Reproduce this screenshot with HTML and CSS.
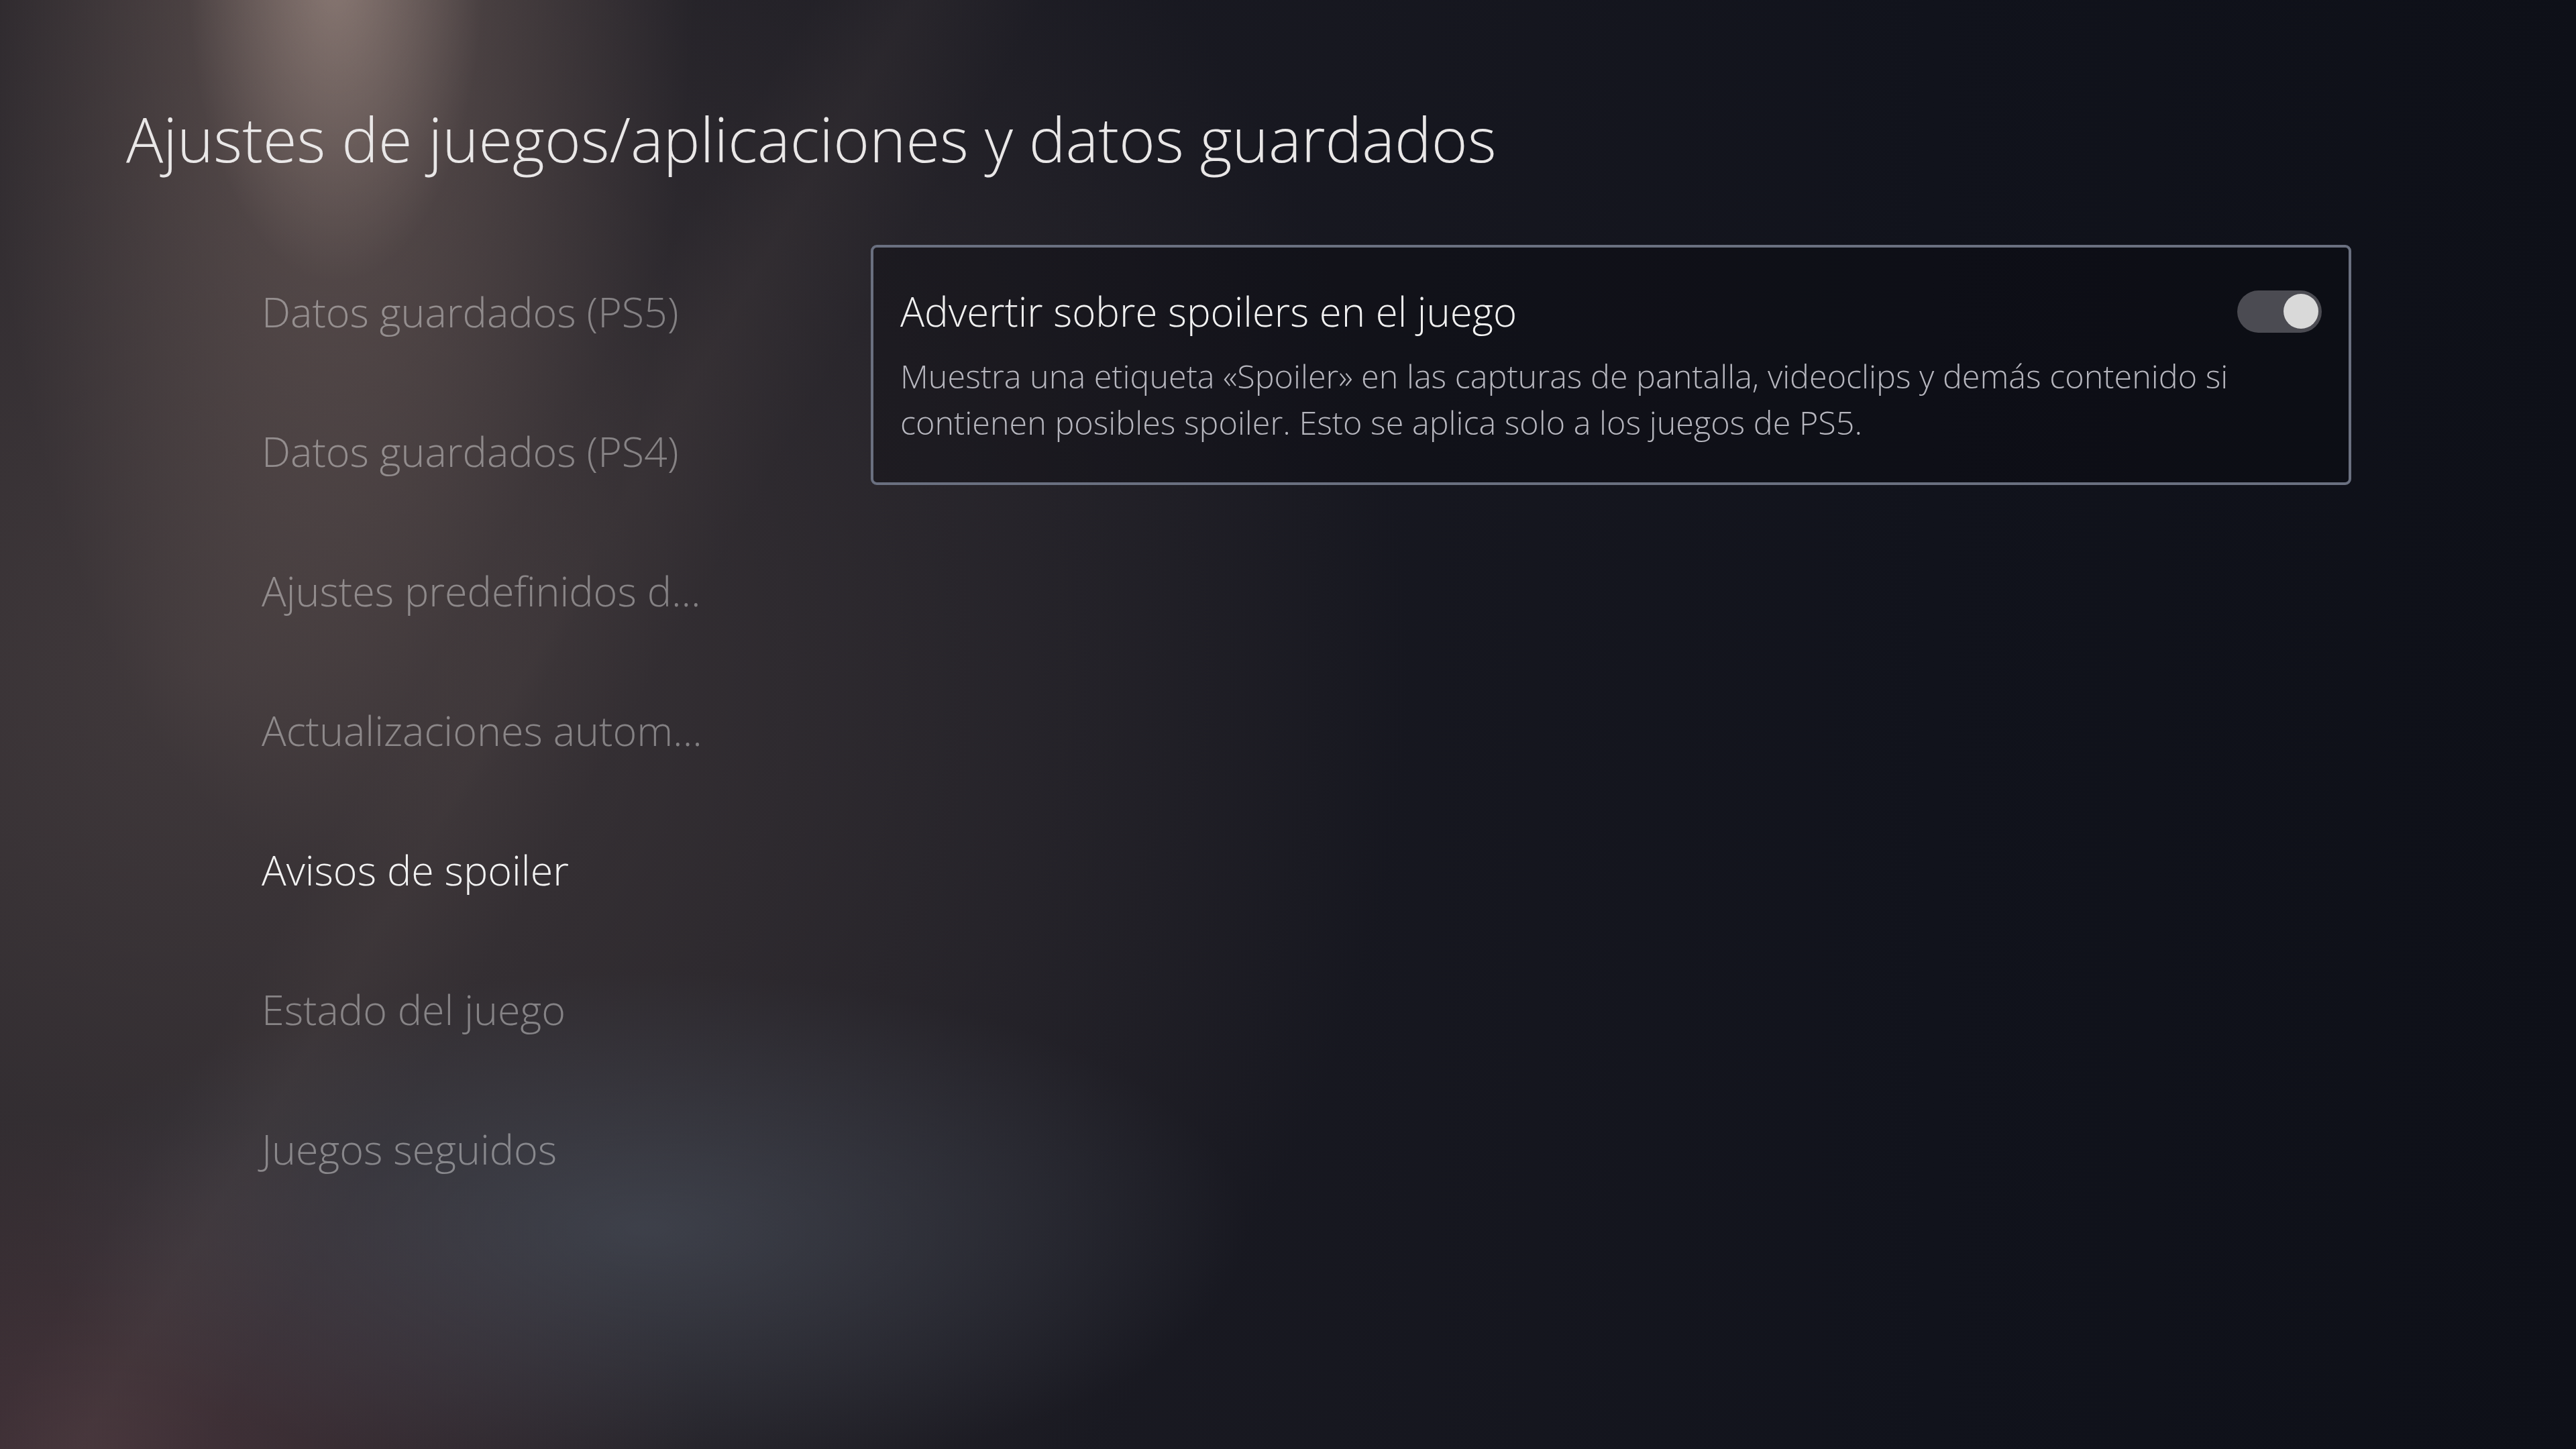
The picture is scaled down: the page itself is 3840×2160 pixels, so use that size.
FILE: index.html
```html
<!DOCTYPE html>
<html>
	<head>
		<meta content="text/html;charset=utf-8" http-equiv="Content-Type">
		<link rel="stylesheet" href="styles.css">
	</head>
	<body>
		<div class="screen">
			<h1 class="title">Ajustes de juegos/aplicaciones y datos guardados</h1>

			<div class="content">
				<ul class="menu">
					<li>Datos guardados (PS5)</li>
					<li>Datos guardados (PS4)</li>
					<li>Ajustes predefinidos d...</li>
					<li>Actualizaciones autom...</li>
					<li class="active">Avisos de spoiler</li>
					<li>Estado del juego</li>
					<li>Juegos seguidos</li>
				</ul>

				<div class="panel">
					<div class="option">
						<div class="option-head">
							<span class="option-title">Advertir sobre spoilers en el juego</span>
							<span class="toggle on"><span class="knob"></span></span>
						</div>
						<p class="option-desc">Muestra una etiqueta «Spoiler» en las capturas de pantalla, videoclips y demás contenido si contienen posibles spoiler. Esto se aplica solo a los juegos de PS5.</p>
					</div>
				</div>
			</div>
		</div>
	</body>
</html>
```

FILE: styles.css
```css
html, body {
	margin: 0;
	height: 100%;
}
body {
	font-family: "Open Sans", "Noto Sans", sans-serif;
	font-weight: 300;
	color: #eee;
	background-color: #10121b;
	background-image:
		radial-gradient(ellipse 220px 460px at 500px -40px, rgba(190, 168, 158, 0.45), rgba(190, 168, 158, 0) 100%),
		radial-gradient(ellipse 540px 1500px at 500px -200px, rgba(160, 135, 125, 0.45), rgba(160, 135, 125, 0) 100%),
		linear-gradient(120deg, rgba(0, 0, 0, 0) 1050px, rgba(130, 112, 105, 0.08) 1180px, rgba(0, 0, 0, 0) 1350px),
		radial-gradient(ellipse 900px 380px at 960px 1830px, rgba(85, 95, 110, 0.45), rgba(85, 95, 110, 0) 100%),
		radial-gradient(ellipse 900px 500px at 150px 2160px, rgba(92, 62, 70, 0.5), rgba(92, 62, 70, 0) 100%),
		radial-gradient(ellipse 1800px 1700px at 300px 1000px, rgba(68, 60, 62, 0.9), rgba(68, 60, 62, 0) 100%),
		linear-gradient(90deg, #201e24 0%, #1a1a22 40%, #11131c 75%, #0e1018 100%);
}
.screen {
	width: 3840px;
	height: 2160px;
	padding: 147px 0 0 188px;
	box-sizing: border-box;
}
.title {
	margin: 0;
	font-size: 92px;
	font-weight: 300;
	line-height: 120px;
	color: #e9e7e7;
}
.content {
	display: flex;
	margin-top: 98px;
	padding-left: 202px;
}
.menu {
	list-style: none;
	margin: 0;
	padding: 0;
	width: 908px;
	flex: none;
}
.menu li {
	font-size: 61px;
	line-height: 208px;
	margin-top: -82px;
	padding-top: 82px;
	color: rgba(255, 255, 255, 0.4);
	white-space: nowrap;
}
.menu li:first-child {
	margin-top: -94px;
	padding-top: 90px;
}
.menu li.active {
	color: #f2f2f2;
}
.panel {
	width: 2207px;
	flex: none;
}
.option {
	border: 4px solid #6a7080;
	border-radius: 9px;
	background: rgba(8, 8, 14, 0.35);
	padding: 55px 40px 55px 40px;
}
.option-head {
	display: flex;
	align-items: center;
	justify-content: space-between;
	height: 80px;
}
.option-title {
	font-size: 60px;
	line-height: 80px;
	color: #f1f1f1;
}
.toggle {
	width: 126px;
	height: 63px;
	border-radius: 32px;
	background: #4b4b52;
	display: flex;
	align-items: center;
	justify-content: flex-end;
	padding: 0 5px;
	box-sizing: border-box;
}
.knob {
	width: 52px;
	height: 52px;
	border-radius: 50%;
	background: #d9d9d9;
}
.option-desc {
	margin: 22px 0 0 0;
	font-size: 48.5px;
	line-height: 69px;
	color: #b6b6be;
	max-width: 2060px;
}
```
